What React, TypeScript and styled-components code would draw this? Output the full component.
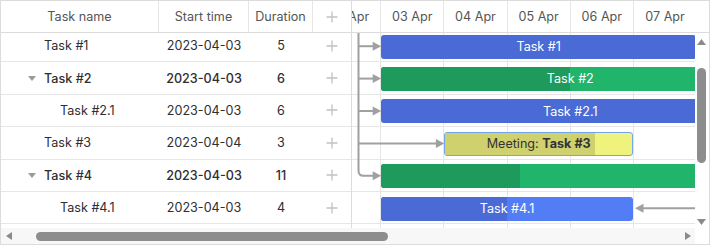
import React, { useLayoutEffect, useRef } from 'react'
import styled, { createGlobalStyle } from 'styled-components'

const DAY = 63.2
const ROW = 32.4
const SCROLL_X = 34
const SCROLL_Y = 3

const colors = {
	border: '#dcdcdc',
	line: '#e6e6e6',
	link: '#a0a0a0',
	blue: '#4a6ad6',
	blueLight: '#537df5',
	green: '#1e9a5c',
	greenLight: '#21b56c',
	meeting: '#cfd06e',
	meetingLight: '#f0f27e',
}

type Task = {
	id: number
	text: string
	start: string
	duration: number
	level: number
	parent?: boolean
	kind: 'task' | 'summary' | 'meeting'
	progress: number
}

const tasks: Task[] = [
	{ id: 1, text: 'Task #1', start: '2023-04-03', duration: 5, level: 0, kind: 'task', progress: 100 },
	{ id: 2, text: 'Task #2', start: '2023-04-03', duration: 6, level: 0, parent: true, kind: 'summary', progress: 50 },
	{ id: 21, text: 'Task #2.1', start: '2023-04-03', duration: 6, level: 1, kind: 'task', progress: 100 },
	{ id: 3, text: 'Task #3', start: '2023-04-04', duration: 3, level: 0, kind: 'meeting', progress: 80 },
	{ id: 4, text: 'Task #4', start: '2023-04-03', duration: 11, level: 0, parent: true, kind: 'summary', progress: 20 },
	{ id: 41, text: 'Task #4.1', start: '2023-04-03', duration: 4, level: 1, kind: 'task', progress: 50 },
]

// scale starts on 02 Apr, only the visible days get a header cell
const COLS = 13
const days = Array.from({ length: 6 }, (_, i) => `${String(i + 2).padStart(2, '0')} Apr`)
const dayIndex = (date: string) => Number(date.slice(8)) - 2

const GlobalStyle = createGlobalStyle`
	html, body {
		margin: 0;
		padding: 0;
		background: #fff;
	}
	body {
		font-family: Inter, 'Noto Sans', sans-serif;
		font-size: 12.6px;
		color: #333;
	}
`

const App: React.FC = () => {
	const gridBody = useRef<HTMLDivElement>(null)
	const timeHead = useRef<HTMLDivElement>(null)
	const timeBody = useRef<HTMLDivElement>(null)

	useLayoutEffect(() => {
		if (gridBody.current) gridBody.current.scrollTop = SCROLL_Y
		if (timeHead.current) timeHead.current.scrollLeft = SCROLL_X
		if (timeBody.current) {
			timeBody.current.scrollTop = SCROLL_Y
			timeBody.current.scrollLeft = SCROLL_X
		}
	}, [])

	const cy = (i: number) => ROW * i + ROW / 2
	const barStart = (t: Task) => dayIndex(t.start) * DAY
	const vx = 40.5

	return (
		<>
			<GlobalStyle />
			<Frame>
				<GridHeader>
					<HeadCell>Task name</HeadCell>
					<HeadCell>Start time</HeadCell>
					<HeadCell>Duration</HeadCell>
					<HeadCell $last>
						<PlusIcon />
					</HeadCell>
				</GridHeader>

				<TimeHeader ref={timeHead}>
					<Scale>
						{days.map((d) => (
							<ScaleCell key={d}>{d}</ScaleCell>
						))}
					</Scale>
				</TimeHeader>
				<Corner />

				<GridBody ref={gridBody}>
					{tasks.map((t) => (
						<GridRow key={t.id} $bold={!!t.parent}>
							<NameCell $level={t.level}>
								<Toggle>{t.parent && <Caret />}</Toggle>
								{t.text}
							</NameCell>
							<Cell>{t.start}</Cell>
							<Cell>{t.duration}</Cell>
							<Cell>
								<PlusIcon />
							</Cell>
						</GridRow>
					))}
				</GridBody>

				<TimeViewport ref={timeBody}>
					<Canvas>
						{tasks.map((t) => (
							<TimeRow key={t.id}>
								<Bar
									$kind={t.kind}
									style={{ marginLeft: barStart(t), width: t.duration * DAY - 1 }}
								>
									<Progress $kind={t.kind} style={{ width: `${t.progress}%` }} />
									{t.kind === 'meeting' ? (
										<BarLabel $dark>
											Meeting: <b>{t.text}</b>
										</BarLabel>
									) : (
										<BarLabel>{t.text}</BarLabel>
									)}
								</Bar>
							</TimeRow>
						))}
						<Links>
							<path
								d={`M${vx},0 V${cy(4) - 5} Q${vx},${cy(4)} ${vx + 5},${cy(4)} H${DAY - 7}`}
							/>
							{[0, 1, 2].map((i) => (
								<path key={i} d={`M${vx},${cy(i)} H${DAY - 7}`} />
							))}
							<path d={`M${vx},${cy(3)} H${2 * DAY - 7}`} />
							<path d={`M${5 * DAY + 8},${cy(5)} H${9 * DAY}`} />
							{[0, 1, 2, 4].map((i) => (
								<polygon
									key={i}
									points={`${DAY - 8.5},${cy(i) - 4.5} ${DAY},${cy(i)} ${DAY - 8.5},${cy(i) + 4.5}`}
								/>
							))}
							<polygon
								points={`${2 * DAY - 8.5},${cy(3) - 4.5} ${2 * DAY},${cy(3)} ${2 * DAY - 8.5},${cy(3) + 4.5}`}
							/>
							<polygon
								points={`${5 * DAY + 9.5},${cy(5) - 4.5} ${5 * DAY + 1},${cy(5)} ${5 * DAY + 9.5},${cy(5) + 4.5}`}
							/>
						</Links>
					</Canvas>
				</TimeViewport>

				<VScroll>
					<Arrow $dir="up" />
					<VThumb />
					<Arrow $dir="down" />
				</VScroll>

				<HScroll>
					<Arrow $dir="left" />
					<HThumb />
					<Arrow $dir="right" />
				</HScroll>
			</Frame>
		</>
	)
}

const PlusIcon: React.FC = () => (
	<svg width="12" height="12" viewBox="0 0 12 12">
		<path d="M6 0.5 V11.5 M0.5 6 H11.5" stroke="#c2c2c2" strokeWidth="1.3" fill="none" />
	</svg>
)

const Caret: React.FC = () => (
	<svg width="8" height="5" viewBox="0 0 8 5">
		<path d="M0 0 H8 L4 5 Z" fill="#9a9a9a" />
	</svg>
)

const arrowPaths = {
	up: { w: 9, h: 6, d: 'M0 6 L4.5 0 L9 6 Z' },
	down: { w: 9, h: 6, d: 'M0 0 L9 0 L4.5 6 Z' },
	left: { w: 6, h: 8, d: 'M6 0 L6 8 L0 4 Z' },
	right: { w: 6, h: 8, d: 'M0 0 L6 4 L0 8 Z' },
}

const Arrow: React.FC<{ $dir: keyof typeof arrowPaths }> = ({ $dir }) => {
	const a = arrowPaths[$dir]
	return (
		<ArrowSvg $dir={$dir} width={a.w} height={a.h} viewBox={`0 0 ${a.w} ${a.h}`}>
			<path d={a.d} fill="#8a8a8a" />
		</ArrowSvg>
	)
}

const Frame = styled.div`
	width: 710px;
	height: 245px;
	box-sizing: border-box;
	border: 1px solid ${colors.border};
	display: grid;
	grid-template-columns: 351px 1fr 14px;
	grid-template-rows: 32px 195px 16px;
	overflow: hidden;
	background: #fff;
`

const GridHeader = styled.div`
	grid-column: 1;
	grid-row: 1;
	display: grid;
	grid-template-columns: 158px 90px 64px 38px;
	box-sizing: border-box;
	border-right: 1px solid ${colors.border};
	border-bottom: 1px solid ${colors.border};
	color: #555;
`

const HeadCell = styled.div<{ $last?: boolean }>`
	display: flex;
	align-items: center;
	justify-content: center;
	box-sizing: border-box;
	border-right: ${(p) => (p.$last ? 'none' : `1px solid ${colors.line}`)};
	white-space: nowrap;
`

const TimeHeader = styled.div`
	grid-column: 2;
	grid-row: 1;
	overflow: hidden;
	box-sizing: border-box;
	border-bottom: 1px solid ${colors.border};
`

const Scale = styled.div`
	display: flex;
	width: max-content;
	height: 100%;
`

const ScaleCell = styled.div`
	flex: none;
	width: ${DAY}px;
	box-sizing: border-box;
	border-right: 1px solid ${colors.line};
	display: flex;
	align-items: center;
	justify-content: center;
	color: #555;
	white-space: nowrap;
`

const Corner = styled.div`
	grid-column: 3;
	grid-row: 1;
	border-bottom: 1px solid ${colors.border};
`

const GridBody = styled.div`
	grid-column: 1;
	grid-row: 2;
	overflow: hidden;
	box-sizing: border-box;
	border-right: 1px solid ${colors.border};
	padding-bottom: 10px;
`

const GridRow = styled.div<{ $bold: boolean }>`
	display: grid;
	grid-template-columns: 158px 90px 64px 38px;
	height: ${ROW}px;
	box-sizing: border-box;
	border-bottom: 1px solid ${colors.line};
	font-weight: ${(p) => (p.$bold ? 500 : 400)};
	color: #2e2e33;
`

const Cell = styled.div`
	display: flex;
	align-items: center;
	justify-content: center;
	white-space: nowrap;
`

const NameCell = styled.div<{ $level: number }>`
	display: flex;
	align-items: center;
	gap: 4px;
	padding-left: ${(p) => 23 + p.$level * 16}px;
	white-space: nowrap;
`

const Toggle = styled.span`
	flex: none;
	width: 16px;
	display: flex;
	align-items: center;
	justify-content: center;
`

const TimeViewport = styled.div`
	grid-column: 2;
	grid-row: 2;
	overflow: hidden;
`

const Canvas = styled.div`
	position: relative;
	width: ${DAY * COLS}px;
	padding-bottom: 10px;
	background-image: repeating-linear-gradient(
		to right,
		transparent 0 ${DAY - 1}px,
		${colors.line} ${DAY - 1}px ${DAY}px
	);
`

const TimeRow = styled.div`
	display: flex;
	align-items: flex-start;
	height: ${ROW}px;
	box-sizing: border-box;
	padding-top: 4.6px;
	border-bottom: 1px solid ${colors.line};
`

const barBase = {
	task: colors.blueLight,
	summary: colors.greenLight,
	meeting: colors.meetingLight,
}
const barDone = {
	task: colors.blue,
	summary: colors.green,
	meeting: colors.meeting,
}

const Bar = styled.div<{ $kind: Task['kind'] }>`
	flex: none;
	height: 24px;
	box-sizing: border-box;
	display: grid;
	border-radius: 3px;
	overflow: hidden;
	background: ${(p) => barBase[p.$kind]};
	border: ${(p) => (p.$kind === 'meeting' ? '1px solid #72a6ec' : 'none')};
`

const Progress = styled.div<{ $kind: Task['kind'] }>`
	grid-area: 1 / 1;
	justify-self: start;
	height: 100%;
	background: ${(p) => barDone[p.$kind]};
`

const BarLabel = styled.div<{ $dark?: boolean }>`
	grid-area: 1 / 1;
	z-index: 1;
	align-self: center;
	text-align: center;
	white-space: nowrap;
	color: ${(p) => (p.$dark ? '#333' : '#fff')};
	b {
		font-weight: 700;
	}
`

const Links = styled.svg`
	position: absolute;
	top: 0;
	left: 0;
	width: 100%;
	height: 100%;
	overflow: visible;
	pointer-events: none;
	path {
		fill: none;
		stroke: ${colors.link};
		stroke-width: 2;
	}
	polygon {
		fill: ${colors.link};
	}
`

const VScroll = styled.div`
	grid-column: 3;
	grid-row: 2 / span 2;
	display: flex;
	flex-direction: column;
	align-items: center;
	padding-right: 1px;
	background: #fff;
`

const VThumb = styled.div`
	width: 9px;
	height: 95px;
	margin: 23px 0 56px;
	border-radius: 5px;
	background: #8d8d8d;
`

const HScroll = styled.div`
	grid-column: 1 / span 2;
	grid-row: 3;
	display: flex;
	align-items: center;
	padding: 0 4px 0 5px;
	background: #f7f7f7;
`

const HThumb = styled.div`
	width: 352px;
	height: 9px;
	margin-left: 24px;
	margin-right: auto;
	border-radius: 5px;
	background: #8d8d8d;
`

const ArrowSvg = styled.svg<{ $dir: string }>`
	flex: none;
	display: block;
	margin-top: ${(p) => (p.$dir === 'up' ? '6px' : '0')};
`

export default App
